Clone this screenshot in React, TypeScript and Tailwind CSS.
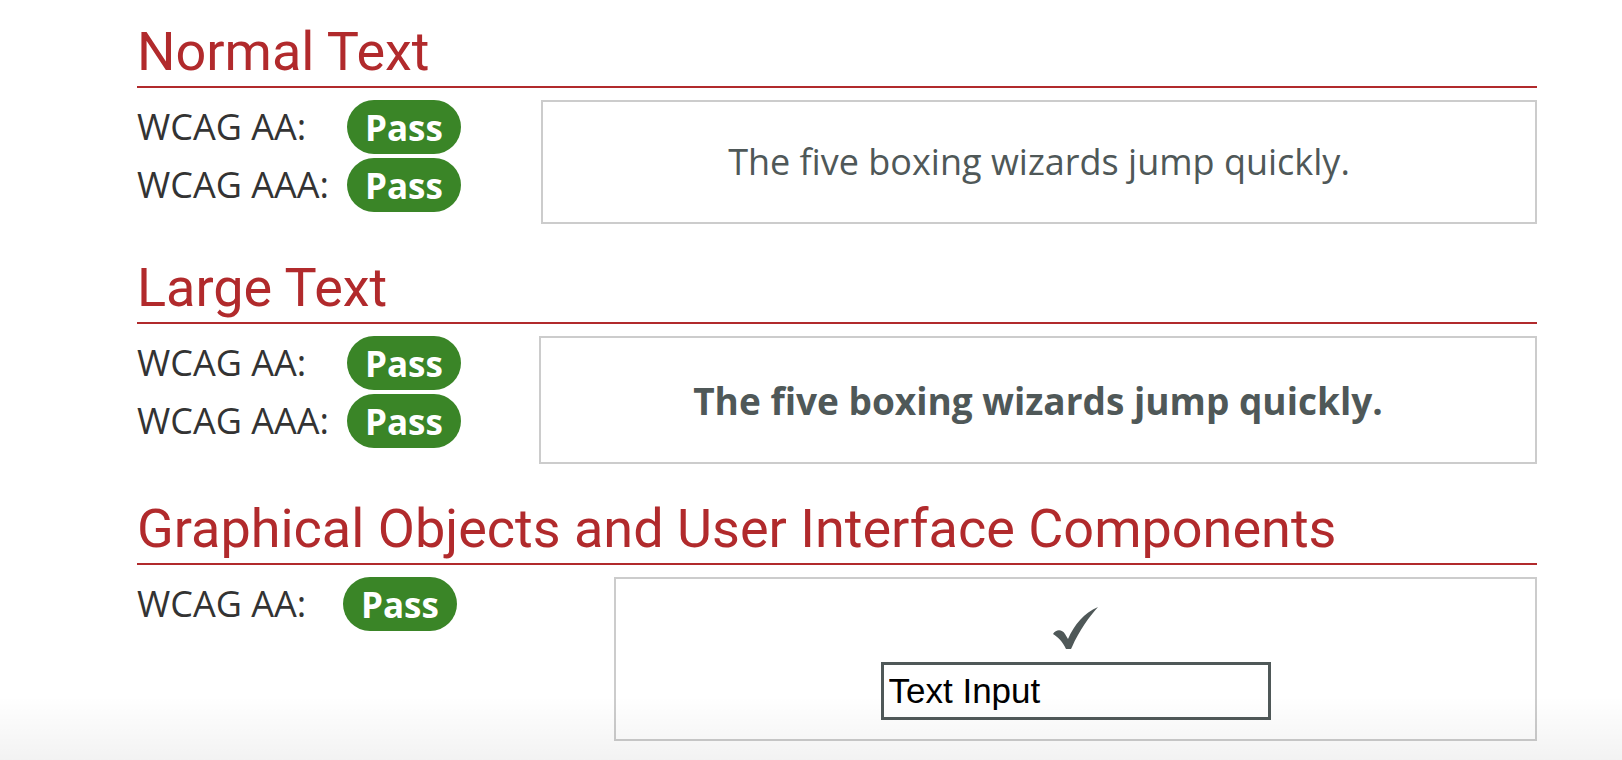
import React from "react";

const heading = "font-['Roboto',sans-serif] text-[54px] leading-[64px] text-[#b12a2c] pb-[2px] border-b-2 border-[#b12a2c]";
const label = "font-['Open_Sans',sans-serif] text-[36px] leading-[54px] text-[#333333]";

function Badge() {
  return (
    <span className="inline-flex h-[54px] items-center rounded-full bg-[#3a8527] px-[18px] font-['Open_Sans',sans-serif] text-[35px] font-bold leading-none text-white">
      Pass
    </span>
  );
}

function Row({ name, w }: { name: string; w: string }) {
  return (
    <div className="flex h-[54px] items-center">
      <span className={`${label} ${w}`}>{name}</span>
      <Badge />
    </div>
  );
}

function Check() {
  return (
    <svg width="45" height="42" viewBox="0 0 45 42" className="block">
      <path
        d="M0 27 C3 22 9 22 12 27 L15 32 C21 18 31 6 45 0 C36 10 26 24 19 40 L18 42 L13 42 C10 35 5 30 0 27 Z"
        fill="#4f5858"
      />
    </svg>
  );
}

export default function App() {
  return (
    <div className="relative h-[760px] w-[1622px] overflow-hidden bg-white">
      <div className="ml-[137px] w-[1400px] pt-[20px]">
        {/* Normal Text */}
        <section>
          <h2 className={heading}>Normal Text</h2>
          <div className="mt-[12px] flex">
            <div className="flex w-[404px] flex-col gap-[4px]">
              <Row name="WCAG AA:" w="w-[210px]" />
              <Row name="WCAG AAA:" w="w-[210px]" />
            </div>
            <div className="flex h-[124px] flex-1 items-center justify-center border-2 border-[#cccccc]">
              <span className="font-['Open_Sans',sans-serif] text-[36px] leading-none text-[#4f5858]">
                The five boxing wizards jump quickly.
              </span>
            </div>
          </div>
        </section>

        {/* Large Text */}
        <section className="mt-[32px]">
          <h2 className={heading}>Large Text</h2>
          <div className="mt-[12px] flex">
            <div className="flex w-[402px] flex-col gap-[4px]">
              <Row name="WCAG AA:" w="w-[210px]" />
              <Row name="WCAG AAA:" w="w-[210px]" />
            </div>
            <div className="flex h-[128px] flex-1 items-center justify-center border-2 border-[#cccccc]">
              <span className="font-['Open_Sans',sans-serif] text-[37px] font-bold leading-none text-[#4f5858]">
                The five boxing wizards jump quickly.
              </span>
            </div>
          </div>
        </section>

        {/* Graphical Objects */}
        <section className="mt-[33px]">
          <h2 className={heading}>Graphical Objects and User Interface Components</h2>
          <div className="mt-[12px] flex">
            <div className="flex w-[477px] flex-col">
              <Row name="WCAG AA:" w="w-[206px]" />
            </div>
            <div className="flex h-[164px] flex-1 flex-col items-center border-2 border-[#cccccc] pt-[28px]">
              <Check />
              <input
                readOnly
                value="Text Input"
                className="mt-[13px] h-[58px] w-[390px] border-[3px] border-[#4f5858] bg-white pl-[5px] font-['Liberation_Sans',Arial,sans-serif] text-[35px] text-black outline-none"
              />
            </div>
          </div>
        </section>
      </div>
      <div className="pointer-events-none absolute bottom-0 left-0 h-[64px] w-full bg-linear-to-b from-black/0 to-black/[0.05]" />
    </div>
  );
}
